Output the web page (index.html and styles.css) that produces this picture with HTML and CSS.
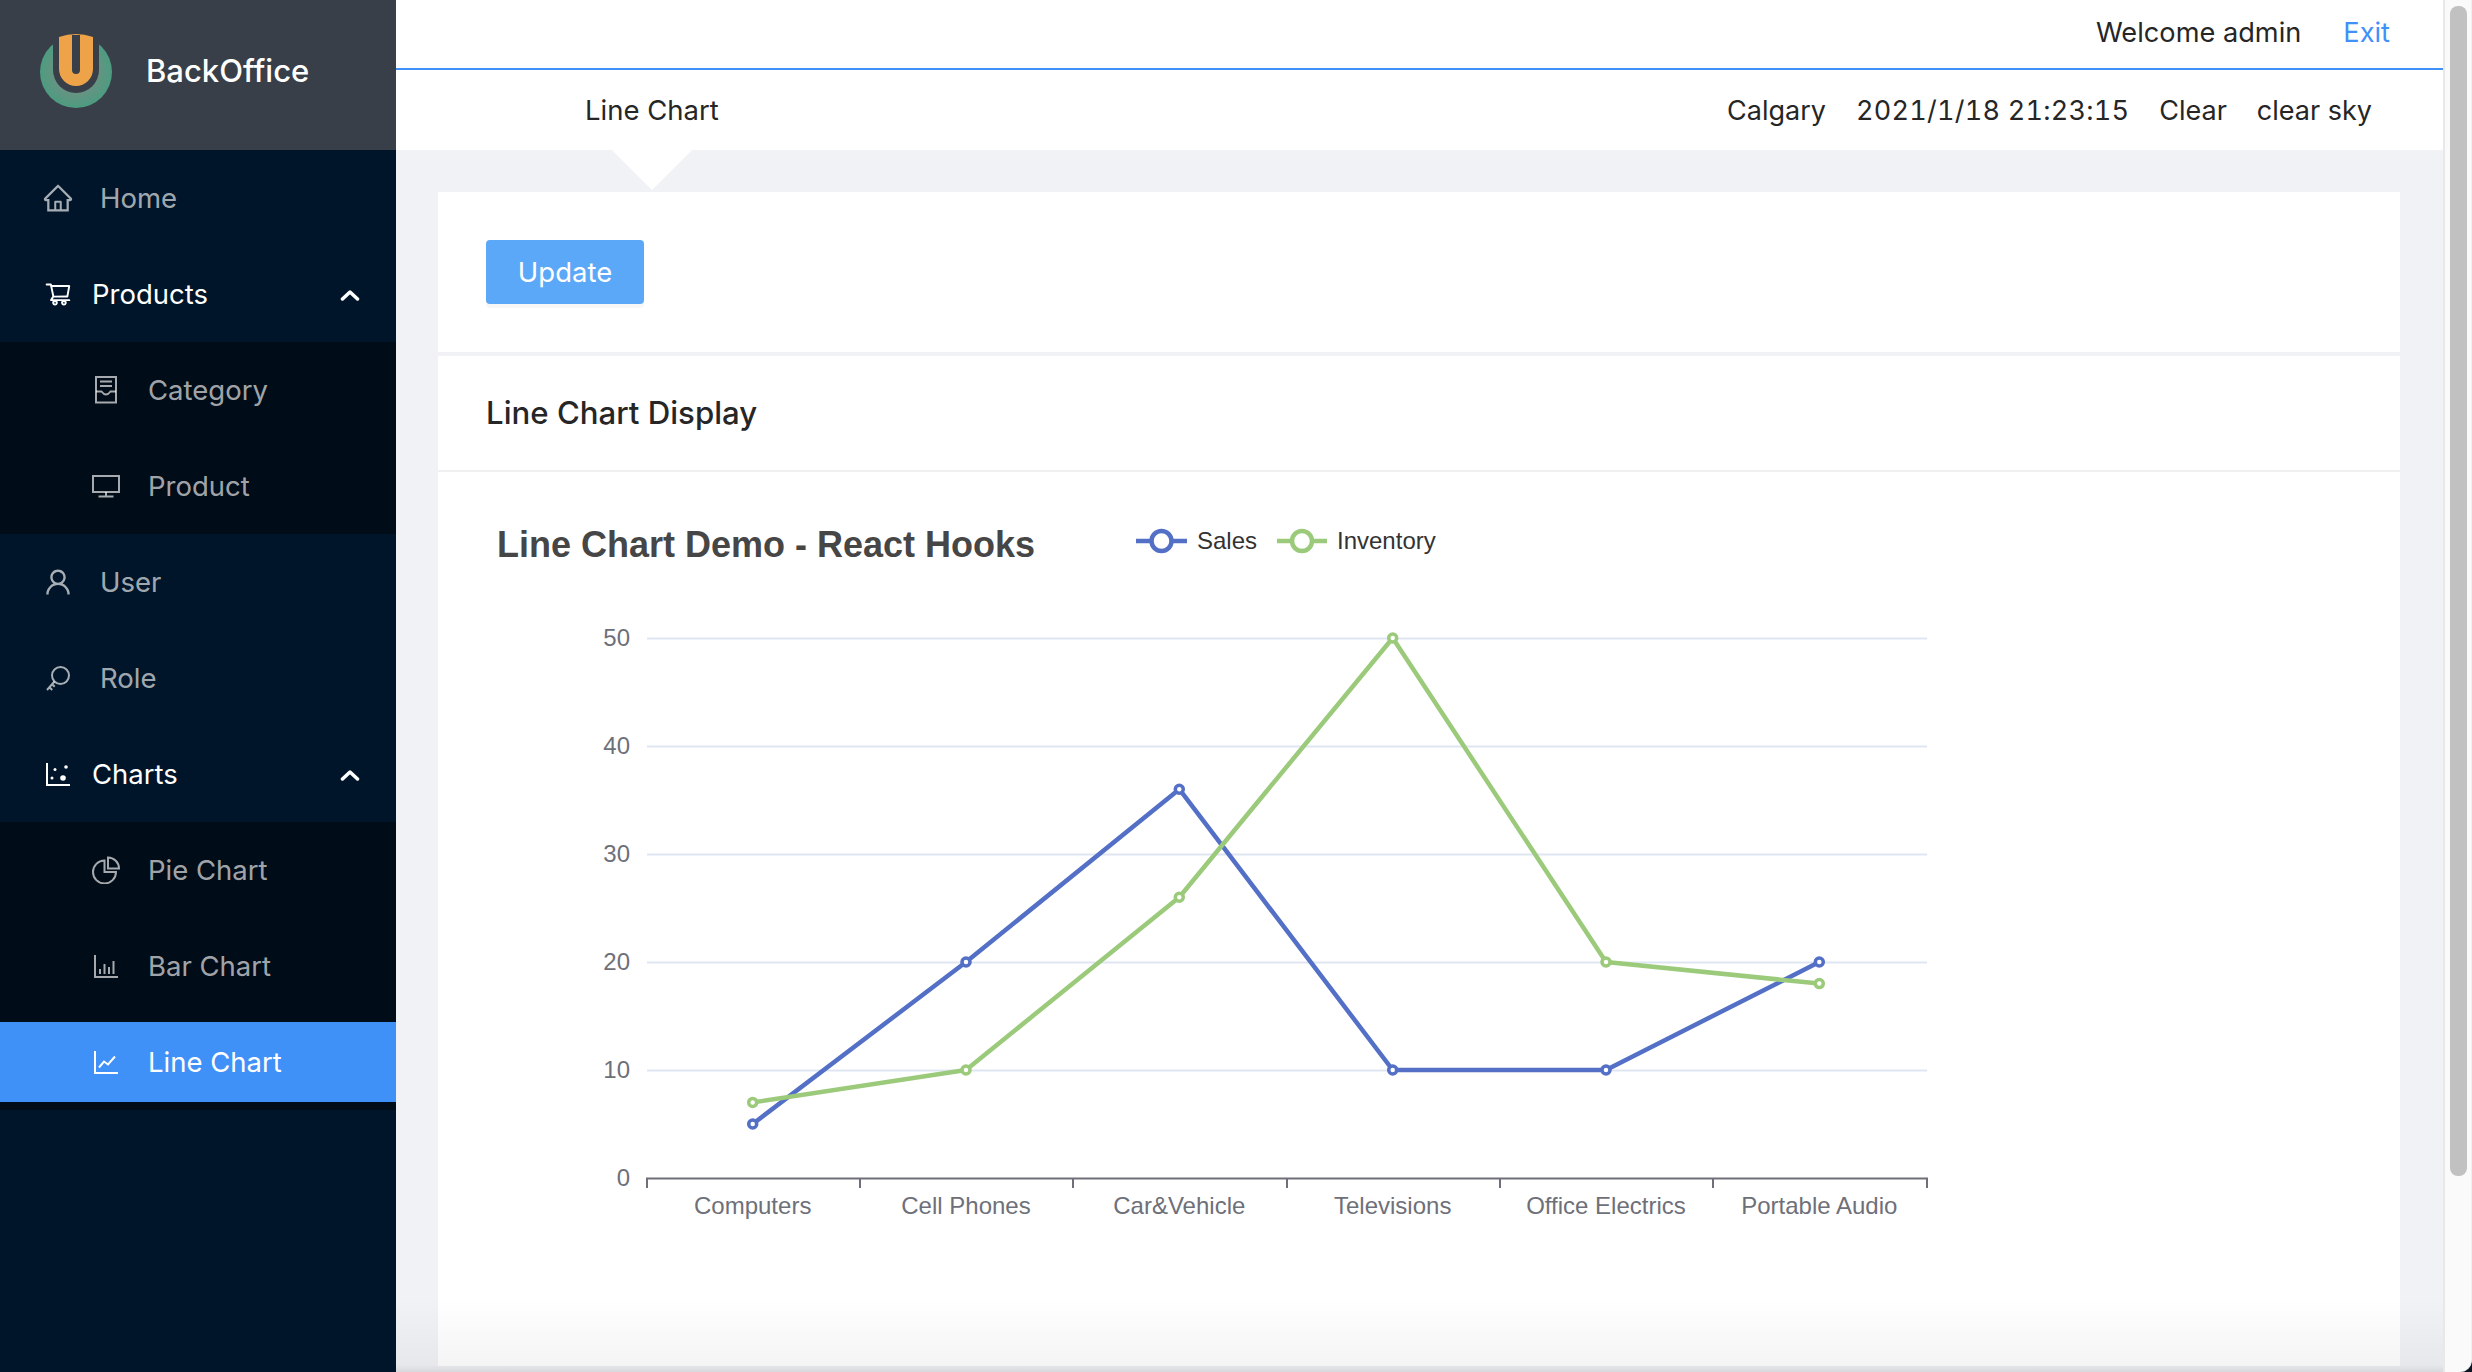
FILE: index.html
```html
<!DOCTYPE html>
<html lang="en">
<head>
<meta charset="utf-8">
<title>BackOffice</title>
<link rel="stylesheet" href="styles.css">
</head>
<body>
<div class="app">
  <aside class="sidebar">
    <div class="brand">
      <svg class="brand-logo" viewBox="40 33 72 76" width="72" height="76">
        <defs>
          <radialGradient id="ring" cx="76" cy="72" r="36" gradientUnits="userSpaceOnUse">
            <stop offset="0.55" stop-color="#6a9283"/>
            <stop offset="1" stop-color="#4c9c80"/>
          </radialGradient>
        </defs>
        <circle cx="76" cy="72" r="36" fill="url(#ring)"/>
        <path d="M53 30H99V70A23 23 0 0 1 53 70Z" fill="#393f49"/>
        <path d="M59 37Q76 31 93 37V69A17 17 0 0 1 59 69ZM72 35V70A4 4 0 0 0 80 70V35Z" fill="#eea348" fill-rule="evenodd"/>
      </svg>
      <span class="brand-name">BackOffice</span>
    </div>
    <nav class="menu">
      <a class="item item-top">
        <svg class="icon icon-lg" viewBox="0 0 1024 1024"><path class="fill" d="M946.5 505L560.1 118.8l-25.9-25.9a31.5 31.5 0 0 0-44.4 0L77.5 505a63.9 63.9 0 0 0-18.8 46c.4 35.2 29.7 63.3 64.9 63.3h42.5V940h691.8V614.3h43.4c17.1 0 33.2-6.7 45.3-18.8a63.6 63.6 0 0 0 18.7-45.3c0-17-6.7-33.1-18.8-45.2zM568 868H456V664h112v204zm217.9-325.7V868H632V640c0-22.1-17.9-40-40-40H432c-22.1 0-40 17.9-40 40v228H238.1V542.3h-96l370-369.7 23.1 23.1L882 542.3h-96.1z"/></svg>
        <span>Home</span>
      </a>
      <a class="item item-parent">
        <svg class="icon" viewBox="0 0 1024 1024"><path class="fill" d="M922.9 701.9H327.4l29.9-60.9 496.8-.9c16.8 0 31.2-12 34.2-28.6l68.8-385.1c1.8-10.1-.9-20.5-7.5-28.4a34.99 34.99 0 0 0-26.6-12.5l-632-2.1-5.4-25.4c-3.4-16.2-18-28-34.6-28H96.5a35.3 35.3 0 1 0 0 70.6h125.9L246 312.8l58.1 281.3-74.8 122.1a34.96 34.96 0 0 0-3 36.8c6 11.9 18.1 19.4 31.5 19.4h62.8a102.43 102.43 0 0 0-20.6 61.7c0 56.6 46 102.6 102.6 102.6s102.6-46 102.6-102.6c0-22.3-7.4-44-20.6-61.7h161.1a102.43 102.43 0 0 0-20.6 61.7c0 56.6 46 102.6 102.6 102.6s102.6-46 102.6-102.6c0-22.3-7.4-44-20.6-61.7H923c19.4 0 35.3-15.8 35.3-35.3a35.42 35.42 0 0 0-35.4-35.1zM305.7 253l575.8 1.9-56.4 315.8-452.3.8L305.7 253zm96.9 612.7c-17.4 0-31.6-14.2-31.6-31.6 0-17.4 14.2-31.6 31.6-31.6s31.6 14.2 31.6 31.6a31.6 31.6 0 0 1-31.6 31.6zm325.1 0c-17.4 0-31.6-14.2-31.6-31.6 0-17.4 14.2-31.6 31.6-31.6s31.6 14.2 31.6 31.6a31.6 31.6 0 0 1-31.6 31.6z"/></svg>
        <span>Products</span>
        <svg class="chevron" viewBox="0 0 20 12"><path d="M2.5 10L10 3l7.5 7"/></svg>
      </a>
      <div class="submenu">
        <a class="item item-sub">
          <svg class="icon" viewBox="0 0 28 28"><g class="line"><rect x="4" y="1" width="20" height="25.5"/><path d="M8 5.5H20M8 10H20M4 15.5H9.5Q14 21.5 18.500 15.500H24"/></g></svg>
          <span>Category</span>
        </a>
        <a class="item item-sub">
          <svg class="icon" viewBox="0 0 28 28"><g class="line"><rect x="1" y="4" width="26" height="16"/><path d="M14 20V24.500M6.500 24.500H21.500"/></g></svg>
          <span>Product</span>
        </a>
      </div>
      <a class="item item-top">
        <svg class="icon icon-lg" viewBox="0 0 1024 1024"><path class="fill" d="M858.5 763.6a374 374 0 0 0-80.6-119.5 375.63 375.63 0 0 0-119.5-80.6c-.4-.2-.8-.3-1.2-.5C719.5 518 760 444.7 760 362c0-137-111-248-248-248S264 225 264 362c0 82.7 40.5 156 102.8 201.1-.4.2-.8.3-1.2.5-44.8 18.9-85 46-119.5 80.6a375.63 375.63 0 0 0-80.6 119.5A371.7 371.7 0 0 0 136 901.8a8 8 0 0 0 8 8.2h60c4.4 0 7.9-3.5 8-7.8 2-77.2 33-149.5 87.8-204.3 56.7-56.7 132-87.9 212.2-87.9s155.5 31.2 212.2 87.9C779 752.7 810 825 812 902.2c.1 4.4 3.6 7.8 8 7.8h60a8 8 0 0 0 8-8.2c-1-47.8-10.9-94.3-29.5-138.2zM512 534c-45.9 0-89.1-17.9-121.6-50.4S340 407.9 340 362c0-45.9 17.9-89.1 50.4-121.6S466.1 190 512 190s89.1 17.9 121.6 50.4S684 316.1 684 362c0 45.9-17.9 89.100-50.400 121.600S557.900 534 512 534z"/></svg>
        <span>User</span>
      </a>
      <a class="item item-top">
        <svg class="icon" viewBox="0 0 28 28"><g class="line"><circle cx="16.500" cy="11.500" r="8.500"/><path d="M10.500 17.500L3 26M5.500 23.200L8.200 26M8.200 20.200L10.700 22.800"/></g></svg>
        <span>Role</span>
      </a>
      <a class="item item-parent">
        <svg class="icon" viewBox="0 0 28 28"><g class="line"><path d="M3 3V25H26"/></g><circle class="fill" cx="8" cy="18" r="1.500"/><circle class="fill" cx="11" cy="9.500" r="1.500"/><circle class="fill" cx="19" cy="18" r="2.800"/><circle class="fill" cx="22" cy="7" r="1.800"/></svg>
        <span>Charts</span>
        <svg class="chevron" viewBox="0 0 20 12"><path d="M2.500 10L10 3l7.500 7"/></svg>
      </a>
      <div class="submenu">
        <a class="item item-sub">
          <svg class="icon" viewBox="0 0 28 28"><g class="line"><path d="M12.500 4.500A11.500 11.500 0 1 0 24 16H12.500Z"/><path d="M16 1.500A11 11 0 0 1 27 12.500H16Z"/></g></svg>
          <span>Pie Chart</span>
        </a>
        <a class="item item-sub">
          <svg class="icon" viewBox="0 0 28 28"><g class="line"><path d="M3 3V25H26"/><path d="M8 17V22M12.500 12V22M17 15V22M21.500 9V22"/></g></svg>
          <span>Bar Chart</span>
        </a>
        <a class="item item-sub item-active">
          <svg class="icon" viewBox="0 0 28 28"><g class="line"><path d="M3 3V25H26"/><path d="M7 19.500L12 13.500L16 16.500L23 8.500"/></g></svg>
          <span>Line Chart</span>
        </a>
      </div>
    </nav>
  </aside>

  <main class="main">
    <header class="topbar">
      <div class="topbar-user">
        <span>Welcome admin</span>
        <a class="exit">Exit</a>
      </div>
      <div class="topbar-info">
        <span class="page-title">Line Chart</span>
        <div class="weather">
          <span>Calgary</span>
          <span class="weather-time">2021/1/18 21:23:15</span>
          <span>Clear</span>
          <span>clear sky</span>
        </div>
      </div>
    </header>
    <div class="caret"></div>
    <section class="content">
      <div class="toolbar">
        <button class="btn" type="button">Update</button>
      </div>
      <div class="card">
        <h2 class="card-head">Line Chart Display</h2>
        <svg class="chart" viewBox="438 472 1962 894" width="1962" height="894">
          <text class="c-title" x="497" y="557">Line Chart Demo - React Hooks</text>

          <path class="s-sales" d="M1136 541H1187"/>
          <circle class="s-sales dot" cx="1161.500" cy="541" r="10"/>
          <text class="c-legend" x="1197" y="549">Sales</text>
          <path class="s-inv" d="M1277 541H1327"/>
          <circle class="s-inv dot" cx="1302" cy="541" r="10"/>
          <text class="c-legend" x="1337" y="549">Inventory</text>

          <g class="grid">
            <path d="M647 638.500H1927"/>
            <path d="M647 746.500H1927"/>
            <path d="M647 854.500H1927"/>
            <path d="M647 962.500H1927"/>
            <path d="M647 1070.500H1927"/>
          </g>
          <path class="axis" d="M646 1178.500H1928M647 1178V1188M860 1178V1188M1073 1178V1188M1287 1178V1188M1500 1178V1188M1713 1178V1188M1927 1178V1188"/>

          <g class="y-labels">
            <text x="630" y="646">50</text>
            <text x="630" y="754">40</text>
            <text x="630" y="862">30</text>
            <text x="630" y="970">20</text>
            <text x="630" y="1078">10</text>
            <text x="630" y="1186">0</text>
          </g>
          <g class="x-labels">
            <text x="752.700" y="1214">Computers</text>
            <text x="966" y="1214">Cell Phones</text>
            <text x="1179.300" y="1214">Car&amp;Vehicle</text>
            <text x="1392.700" y="1214">Televisions</text>
            <text x="1606" y="1214">Office Electrics</text>
            <text x="1819.300" y="1214">Portable Audio</text>
          </g>

          <polyline class="s-sales" points="752.700,1124 966,962 1179.300,789.200 1392.700,1070 1606,1070 1819.300,962"/>
          <g class="s-sales pt">
            <circle cx="752.700" cy="1124" r="4"/><circle cx="966" cy="962" r="4"/><circle cx="1179.300" cy="789.200" r="4"/><circle cx="1392.700" cy="1070" r="4"/><circle cx="1606" cy="1070" r="4"/><circle cx="1819.300" cy="962" r="4"/>
          </g>
          <polyline class="s-inv" points="752.700,1102.400 966,1070 1179.300,897.200 1392.700,638 1606,962 1819.300,983.600"/>
          <g class="s-inv pt">
            <circle cx="752.700" cy="1102.400" r="4"/><circle cx="966" cy="1070" r="4"/><circle cx="1179.300" cy="897.200" r="4"/><circle cx="1392.700" cy="638" r="4"/><circle cx="1606" cy="962" r="4"/><circle cx="1819.300" cy="983.600" r="4"/>
          </g>
        </svg>
      </div>
    </section>
    <div class="fade"></div>
  </main>

  <div class="scrollbar"><div class="thumb"></div></div>
</div>
</body>
</html>
```

FILE: styles.css
```css
* { box-sizing: border-box; }
html, body { margin: 0; height: 100%; overflow: hidden; background: #0b1522; }
body { font-family: Inter, "Noto Sans", sans-serif; font-size: 27.500px; color: #262626; }

.app { display: flex; height: 1372px; }

/* sidebar */
.sidebar { width: 396px; flex: none; background: #001529; }
.brand { height: 150px; background: #393f49; display: flex; align-items: flex-start; padding: 33px 0 0 40px; }
.brand-logo { display: block; flex: none; }
.brand-name { margin: 18px 0 0 34px; font-size: 31px; line-height: 40px; font-weight: 500; color: #fff; }

.menu { display: flex; flex-direction: column; }
.item { display: flex; align-items: center; height: 80px; margin: 8px 0; flex: none; color: rgba(255, 255, 255, .65); }
.icon { width: 28px; height: 28px; flex: none; }
.icon-lg { width: 32px; height: 32px; margin: 0 -2px; }
.fill { fill: currentColor; }
.line { fill: none; stroke: currentColor; stroke-width: 2; }
.item-top { padding-left: 44px; gap: 28px; }
.item-parent { padding-left: 44px; gap: 20px; color: #fff; position: relative; }
.item-sub { padding-left: 92px; gap: 28px; }
.item-active { background: #4091f7; color: #fff; }
.chevron { position: absolute; left: 340px; top: 35px; width: 20px; height: 12px; fill: none; stroke: #fff; stroke-width: 3.5; stroke-linecap: round; stroke-linejoin: round; }
.submenu { display: flex; flex-direction: column; background: #000c17; }

/* main column */
.main { flex: 1; min-width: 0; background: #f0f2f5; position: relative; overflow: hidden; }
.topbar { background: #fff; height: 150px; }
.topbar-user { height: 70px; border-bottom: 2px solid #4091f7; display: flex; justify-content: flex-end; align-items: center; gap: 42px; padding: 0 53px 4px 0; font-size: 27.200px; }
.exit { color: #4091f7; }
.topbar-info { height: 80px; display: flex; justify-content: space-between; align-items: center; padding: 0 71px 0 189px; }
.weather { display: flex; gap: 30px; font-size: 27px; }
.weather-time { font-variant-numeric: tabular-nums; letter-spacing: .25px; }
.caret { position: absolute; left: 216px; top: 150px; width: 0; height: 0; border-left: 40px solid transparent; border-right: 40px solid transparent; border-top: 40px solid #fff; }

.content { padding: 42px 43px 0 42px; }
.toolbar { background: #fff; height: 160px; padding: 48px; margin-bottom: 4px; }
.btn { display: block; width: 158px; height: 64px; border: 0; border-radius: 4px; background: #5ca8f8; color: #fff; font: inherit; box-shadow: 0 4px 0 rgba(0, 0, 0, .03); padding: 0; }
.card { background: #fff; height: 1010px; }
.card-head { margin: 0; height: 116px; padding: 0 48px; border-bottom: 2px solid #f0f0f0; font-size: 31.200px; font-weight: 500; line-height: 114px; color: #262626; }
.chart { display: block; font-family: "Liberation Sans", Arial, sans-serif; }

.c-title { font-size: 36px; font-weight: 700; fill: #464646; }
.c-legend { font-size: 24px; fill: #333; }
.s-sales, .s-inv { fill: none; stroke-width: 4.500; stroke-linejoin: round; }
.s-sales { stroke: #5470c6; }
.s-inv { stroke: #9bca7b; }
.dot, .pt circle { fill: #fff; }
.pt { stroke-width: 3.500; }
.grid { stroke: #e0e6f1; stroke-width: 2; fill: none; }
.axis { stroke: #6e7079; stroke-width: 2; fill: none; }
.y-labels text { font-size: 24px; fill: #6e7079; text-anchor: end; }
.x-labels text { font-size: 24px; fill: #6e7079; text-anchor: middle; }

.fade { position: absolute; left: 0; right: 0; bottom: 0; height: 72px; background: linear-gradient(to bottom, rgba(60, 60, 70, 0) 0, rgba(60, 60, 70, .055) 90%, rgba(60, 60, 70, .14) 100%); pointer-events: none; }

/* scrollbar */
.scrollbar { width: 29px; flex: none; background: #fafafa; border-left: 2px solid #e8e8e8; border-right: 1px solid #f0f0f0; border-bottom-right-radius: 12px; padding: 6px 4px 0 5px; }
.thumb { height: 1170px; background: #c1c1c1; border-radius: 8px; }
```
